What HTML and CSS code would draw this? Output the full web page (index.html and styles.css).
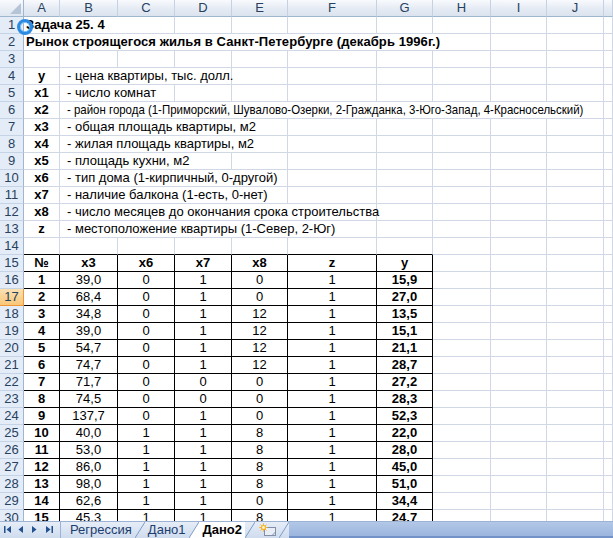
FILE: index.html
```html
<!DOCTYPE html>
<html>
<head>
<meta charset="utf-8">
<link rel="stylesheet" href="styles.css">
</head>
<body>
<div class="app">
  <div class="sheet">
    <div class="row head">
      <div class="corner"><svg width="11" height="11" viewBox="0 0 11 11"><polygon points="11,0 11,11 0,11" fill="#b6c4d8"/></svg></div>
      <div class="ch">A</div><div class="ch">B</div><div class="ch">C</div><div class="ch">D</div><div class="ch">E</div><div class="ch">F</div><div class="ch">G</div><div class="ch">H</div><div class="ch">I</div><div class="ch">J</div><div class="ch"></div>
    </div>
    <div class="row"><div class="rh">1</div><div class="c s3 bold title">Задача 25. 4</div><div class="c"></div><div class="c"></div><div class="c"></div><div class="c"></div><div class="c"></div><div class="c"></div><div class="c"></div><div class="c"></div></div>
    <div class="row"><div class="rh">2</div><div class="c s8 bold title">Рынок строящегося жилья в Санкт-Петербурге (декабрь 1996г.)</div><div class="c"></div><div class="c"></div><div class="c"></div></div>
    <div class="row"><div class="rh">3</div><div class="c"></div><div class="c"></div><div class="c"></div><div class="c"></div><div class="c"></div><div class="c"></div><div class="c"></div><div class="c"></div><div class="c"></div><div class="c"></div><div class="c"></div></div>
    <div class="row"><div class="rh">4</div><div class="c ctr bold">y</div><div class="c s3 txt">- цена квартиры, тыс. долл.</div><div class="c"></div><div class="c"></div><div class="c"></div><div class="c"></div><div class="c"></div><div class="c"></div><div class="c"></div></div>
    <div class="row"><div class="rh">5</div><div class="c ctr bold">x1</div><div class="c s2 txt">- число комнат</div><div class="c"></div><div class="c"></div><div class="c"></div><div class="c"></div><div class="c"></div><div class="c"></div><div class="c"></div><div class="c"></div></div>
    <div class="row"><div class="rh">6</div><div class="c ctr bold">x2</div><div class="c s9 txt"><span class="narrow">- район города (1-Приморский, Шувалово-Озерки, 2-Гражданка, 3-Юго-Запад, 4-Красносельский)</span></div><div class="c"></div></div>
    <div class="row"><div class="rh">7</div><div class="c ctr bold">x3</div><div class="c s4 txt">- общая площадь квартиры, м2</div><div class="c"></div><div class="c"></div><div class="c"></div><div class="c"></div><div class="c"></div><div class="c"></div></div>
    <div class="row"><div class="rh">8</div><div class="c ctr bold">x4</div><div class="c s4 txt">- жилая площадь квартиры, м2</div><div class="c"></div><div class="c"></div><div class="c"></div><div class="c"></div><div class="c"></div><div class="c"></div></div>
    <div class="row"><div class="rh">9</div><div class="c ctr bold">x5</div><div class="c s3 txt">- площадь кухни, м2</div><div class="c"></div><div class="c"></div><div class="c"></div><div class="c"></div><div class="c"></div><div class="c"></div><div class="c"></div></div>
    <div class="row"><div class="rh">10</div><div class="c ctr bold">x6</div><div class="c s4 txt">- тип дома (1-кирпичный, 0-другой)</div><div class="c"></div><div class="c"></div><div class="c"></div><div class="c"></div><div class="c"></div><div class="c"></div></div>
    <div class="row"><div class="rh">11</div><div class="c ctr bold">x7</div><div class="c s4 txt">- наличие балкона (1-есть, 0-нет)</div><div class="c"></div><div class="c"></div><div class="c"></div><div class="c"></div><div class="c"></div><div class="c"></div></div>
    <div class="row"><div class="rh">12</div><div class="c ctr bold">x8</div><div class="c s5 txt">- число месяцев до окончания срока строительства</div><div class="c"></div><div class="c"></div><div class="c"></div><div class="c"></div><div class="c"></div></div>
    <div class="row"><div class="rh">13</div><div class="c ctr bold">z</div><div class="c s5 txt">- местоположение квартиры (1-Север, 2-Юг)</div><div class="c"></div><div class="c"></div><div class="c"></div><div class="c"></div><div class="c"></div></div>
    <div class="row"><div class="rh">14</div><div class="c tb"></div><div class="c tb"></div><div class="c tb"></div><div class="c tb"></div><div class="c tb"></div><div class="c tb"></div><div class="c tb"></div><div class="c"></div><div class="c"></div><div class="c"></div><div class="c"></div></div>
    <div class="row"><div class="rh">15</div><div class="c t bold">№</div><div class="c t bold">x3</div><div class="c t bold">x6</div><div class="c t bold">x7</div><div class="c t bold">x8</div><div class="c t bold">z</div><div class="c t bold">y</div><div class="c"></div><div class="c"></div><div class="c"></div><div class="c"></div></div>
    <div class="row"><div class="rh">16</div><div class="c t bold">1</div><div class="c t">39,0</div><div class="c t">0</div><div class="c t">1</div><div class="c t">0</div><div class="c t">1</div><div class="c t bold">15,9</div><div class="c"></div><div class="c"></div><div class="c"></div><div class="c"></div></div>
    <div class="row"><div class="rh sel">17</div><div class="c t bold">2</div><div class="c t">68,4</div><div class="c t">0</div><div class="c t">1</div><div class="c t">0</div><div class="c t">1</div><div class="c t bold">27,0</div><div class="c"></div><div class="c"></div><div class="c"></div><div class="c"></div></div>
    <div class="row"><div class="rh">18</div><div class="c t bold">3</div><div class="c t">34,8</div><div class="c t">0</div><div class="c t">1</div><div class="c t">12</div><div class="c t">1</div><div class="c t bold">13,5</div><div class="c"></div><div class="c"></div><div class="c"></div><div class="c"></div></div>
    <div class="row"><div class="rh">19</div><div class="c t bold">4</div><div class="c t">39,0</div><div class="c t">0</div><div class="c t">1</div><div class="c t">12</div><div class="c t">1</div><div class="c t bold">15,1</div><div class="c"></div><div class="c"></div><div class="c"></div><div class="c"></div></div>
    <div class="row"><div class="rh">20</div><div class="c t bold">5</div><div class="c t">54,7</div><div class="c t">0</div><div class="c t">1</div><div class="c t">12</div><div class="c t">1</div><div class="c t bold">21,1</div><div class="c"></div><div class="c"></div><div class="c"></div><div class="c"></div></div>
    <div class="row"><div class="rh">21</div><div class="c t bold">6</div><div class="c t">74,7</div><div class="c t">0</div><div class="c t">1</div><div class="c t">12</div><div class="c t">1</div><div class="c t bold">28,7</div><div class="c"></div><div class="c"></div><div class="c"></div><div class="c"></div></div>
    <div class="row"><div class="rh">22</div><div class="c t bold">7</div><div class="c t">71,7</div><div class="c t">0</div><div class="c t">0</div><div class="c t">0</div><div class="c t">1</div><div class="c t bold">27,2</div><div class="c"></div><div class="c"></div><div class="c"></div><div class="c"></div></div>
    <div class="row"><div class="rh">23</div><div class="c t bold">8</div><div class="c t">74,5</div><div class="c t">0</div><div class="c t">0</div><div class="c t">0</div><div class="c t">1</div><div class="c t bold">28,3</div><div class="c"></div><div class="c"></div><div class="c"></div><div class="c"></div></div>
    <div class="row"><div class="rh">24</div><div class="c t bold">9</div><div class="c t">137,7</div><div class="c t">0</div><div class="c t">1</div><div class="c t">0</div><div class="c t">1</div><div class="c t bold">52,3</div><div class="c"></div><div class="c"></div><div class="c"></div><div class="c"></div></div>
    <div class="row"><div class="rh">25</div><div class="c t bold">10</div><div class="c t">40,0</div><div class="c t">1</div><div class="c t">1</div><div class="c t">8</div><div class="c t">1</div><div class="c t bold">22,0</div><div class="c"></div><div class="c"></div><div class="c"></div><div class="c"></div></div>
    <div class="row"><div class="rh">26</div><div class="c t bold">11</div><div class="c t">53,0</div><div class="c t">1</div><div class="c t">1</div><div class="c t">8</div><div class="c t">1</div><div class="c t bold">28,0</div><div class="c"></div><div class="c"></div><div class="c"></div><div class="c"></div></div>
    <div class="row"><div class="rh">27</div><div class="c t bold">12</div><div class="c t">86,0</div><div class="c t">1</div><div class="c t">1</div><div class="c t">8</div><div class="c t">1</div><div class="c t bold">45,0</div><div class="c"></div><div class="c"></div><div class="c"></div><div class="c"></div></div>
    <div class="row"><div class="rh">28</div><div class="c t bold">13</div><div class="c t">98,0</div><div class="c t">1</div><div class="c t">1</div><div class="c t">8</div><div class="c t">1</div><div class="c t bold">51,0</div><div class="c"></div><div class="c"></div><div class="c"></div><div class="c"></div></div>
    <div class="row"><div class="rh">29</div><div class="c t bold">14</div><div class="c t">62,6</div><div class="c t">1</div><div class="c t">1</div><div class="c t">0</div><div class="c t">1</div><div class="c t bold">34,4</div><div class="c"></div><div class="c"></div><div class="c"></div><div class="c"></div></div>
    <div class="row"><div class="rh">30</div><div class="c t bold">15</div><div class="c t">45,3</div><div class="c t">1</div><div class="c t">1</div><div class="c t">8</div><div class="c t">1</div><div class="c t bold">24,7</div><div class="c"></div><div class="c"></div><div class="c"></div><div class="c"></div></div>
    <div class="ring"></div>
  </div>
  <div class="tabbar">
    <div class="nav">
      <svg width="60" height="16" viewBox="0 0 60 16">
        <rect x="4" y="4" width="1.5" height="7" fill="#23508f"/>
        <polygon points="11,4 11,11 6.5,7.5" fill="#23508f"/>
        <polygon points="23,4 23,11 18.5,7.5" fill="#23508f"/>
        <polygon points="32,4 32,11 36.5,7.5" fill="#23508f"/>
        <polygon points="46,4 46,11 50.5,7.5" fill="#23508f"/>
        <rect x="51.5" y="4" width="1.5" height="7" fill="#23508f"/>
      </svg>
    </div>
    <div class="tabs">
      <div class="tab first">Регрессия</div>
      <svg class="slant" width="10" height="16" viewBox="0 0 10 16"><line x1="0" y1="16" x2="10" y2="0" stroke="#7f9cc8"/></svg>
      <div class="tab">Дано1</div>
      <svg class="slant" width="10" height="16" viewBox="0 0 10 16"><polygon points="0,16 10,0 10,16" fill="#ffffff"/><line x1="0" y1="16" x2="10" y2="0" stroke="#7f9cc8"/></svg>
      <div class="tab active">Дано2</div>
      <svg class="slant" width="10" height="16" viewBox="0 0 10 16"><line x1="0" y1="16" x2="10" y2="0" stroke="#7f9cc8"/></svg>
      <div class="tab newtab">
        <svg width="18" height="14" viewBox="0 0 18 14">
          <rect x="5.5" y="4.5" width="11" height="8" fill="#e9eef6" stroke="#8190a8"/>
          <path d="M13 12.5 L16.5 9" stroke="#8190a8" fill="none"/>
          <circle cx="4.5" cy="4.5" r="2.6" fill="#f5b531"/>
          <path d="M4.5 0.3 V8.7 M0.3 4.5 H8.7 M1.5 1.5 L7.5 7.5 M7.5 1.5 L1.5 7.5" stroke="#f5b531" stroke-width="1"/>
          <circle cx="4.5" cy="4.5" r="1.4" fill="#fff3c4"/>
        </svg>
      </div>
      <svg class="slant" width="10" height="16" viewBox="0 0 10 16"><line x1="0" y1="16" x2="10" y2="0" stroke="#7f9cc8"/></svg>
    </div>
    <div class="scroll"></div>
  </div>
</div>
</body>
</html>
```
FILE: styles.css
```css
html, body {
  margin: 0;
  padding: 0;
  background: #ffffff;
}
.app {
  width: 613px;
  height: 538px;
  display: flex;
  flex-direction: column;
  overflow: hidden;
  font-family: "Liberation Sans", Arial, sans-serif;
}
.sheet {
  position: relative;
  flex: 1;
  overflow: hidden;
}
.row {
  display: grid;
  grid-template-columns: 24px 36px 58px 57px 57px 56px 89px 56px 58px 56px 57px 1fr;
  height: 17px;
}
.row > div {
  box-sizing: border-box;
  height: 17px;
  white-space: nowrap;
  overflow: hidden;
}
.row > div.txt,
.row > div.title {
  overflow: visible;
}
.head .ch {
  background: linear-gradient(#f8fafd, #e5ebf4 55%, #dbe3ee);
  border-right: 1px solid #c6d2e2;
  border-bottom: 1px solid #9eb6ce;
  color: #27415f;
  font-size: 13px;
  line-height: 16px;
  text-align: center;
}
.corner {
  background: linear-gradient(#f8fafd, #dfe6f0);
  border-right: 1px solid #9eb6ce;
  border-bottom: 1px solid #9eb6ce;
  display: flex;
  align-items: flex-end;
  justify-content: flex-end;
  padding: 0 2px 2px 0;
}
.corner svg { display: block; }
.rh {
  background: #e4ecf7;
  border-right: 1px solid #9eb6ce;
  border-bottom: 1px solid #c5d3e6;
  color: #27415f;
  font-size: 13px;
  line-height: 16px;
  text-align: center;
}
.rh.sel {
  background: linear-gradient(#fbe1b4, #f8c778);
  border-right: 1px solid #f29536;
  border-bottom: 1px solid #f29536;
  color: #27415f;
}
.c {
  border-right: 1px solid #d0d7e5;
  border-bottom: 1px solid #d0d7e5;
  color: #000000;
  font-size: 13px;
  line-height: 16px;
  padding: 0 2px;
}
.s2 { grid-column: span 2; }
.s3 { grid-column: span 3; }
.s4 { grid-column: span 4; }
.s5 { grid-column: span 5; }
.s8 { grid-column: span 8; }
.s9 { grid-column: span 9; }
.bold { font-weight: bold; }
.title { letter-spacing: 0.08px; }
.ctr { text-align: center; }
.txt { padding-left: 7px; }
.narrow {
  display: inline-block;
  transform: scaleX(0.88);
  transform-origin: 0 50%;
}
.tb { border-bottom: 1px solid #000000; }
.t {
  border-right: 1px solid #000000;
  border-bottom: 1px solid #000000;
  text-align: center;
}
.ring {
  position: absolute;
  left: 17px;
  top: 19px;
  width: 10px;
  height: 10px;
  border: 3px solid #2b8be3;
  border-radius: 50%;
  box-shadow: inset 0 0 0 1px #7cc0f5;
}
.tabbar {
  height: 17px;
  display: flex;
  border-top: 1px solid #9db3d6;
  box-sizing: border-box;
  background: linear-gradient(#e6edf7, #cfdcee);
}
.nav {
  width: 60px;
  border-right: 1px solid #9db3d6;
  flex: none;
}
.nav svg { display: block; }
.tabs {
  display: flex;
  align-items: stretch;
  flex: none;
}
.slant { display: block; flex: none; }
.tab {
  font-size: 13px;
  line-height: 16px;
  height: 16px;
  color: #1d3d6e;
  padding: 0 3px;
}
.tab.first { padding-left: 9px; }
.tab.active {
  background: #ffffff;
  color: #000000;
  font-weight: bold;
  padding: 0 3px 0 4px;
}
.tab.newtab {
  padding: 1px 2px 0 4px;
  box-sizing: border-box;
}
.tab.newtab svg { display: block; }
.scroll {
  flex: 1;
  background: linear-gradient(#b3c8e7, #9bb5de);
  border-bottom: 2px solid #7393c8;
}
```
